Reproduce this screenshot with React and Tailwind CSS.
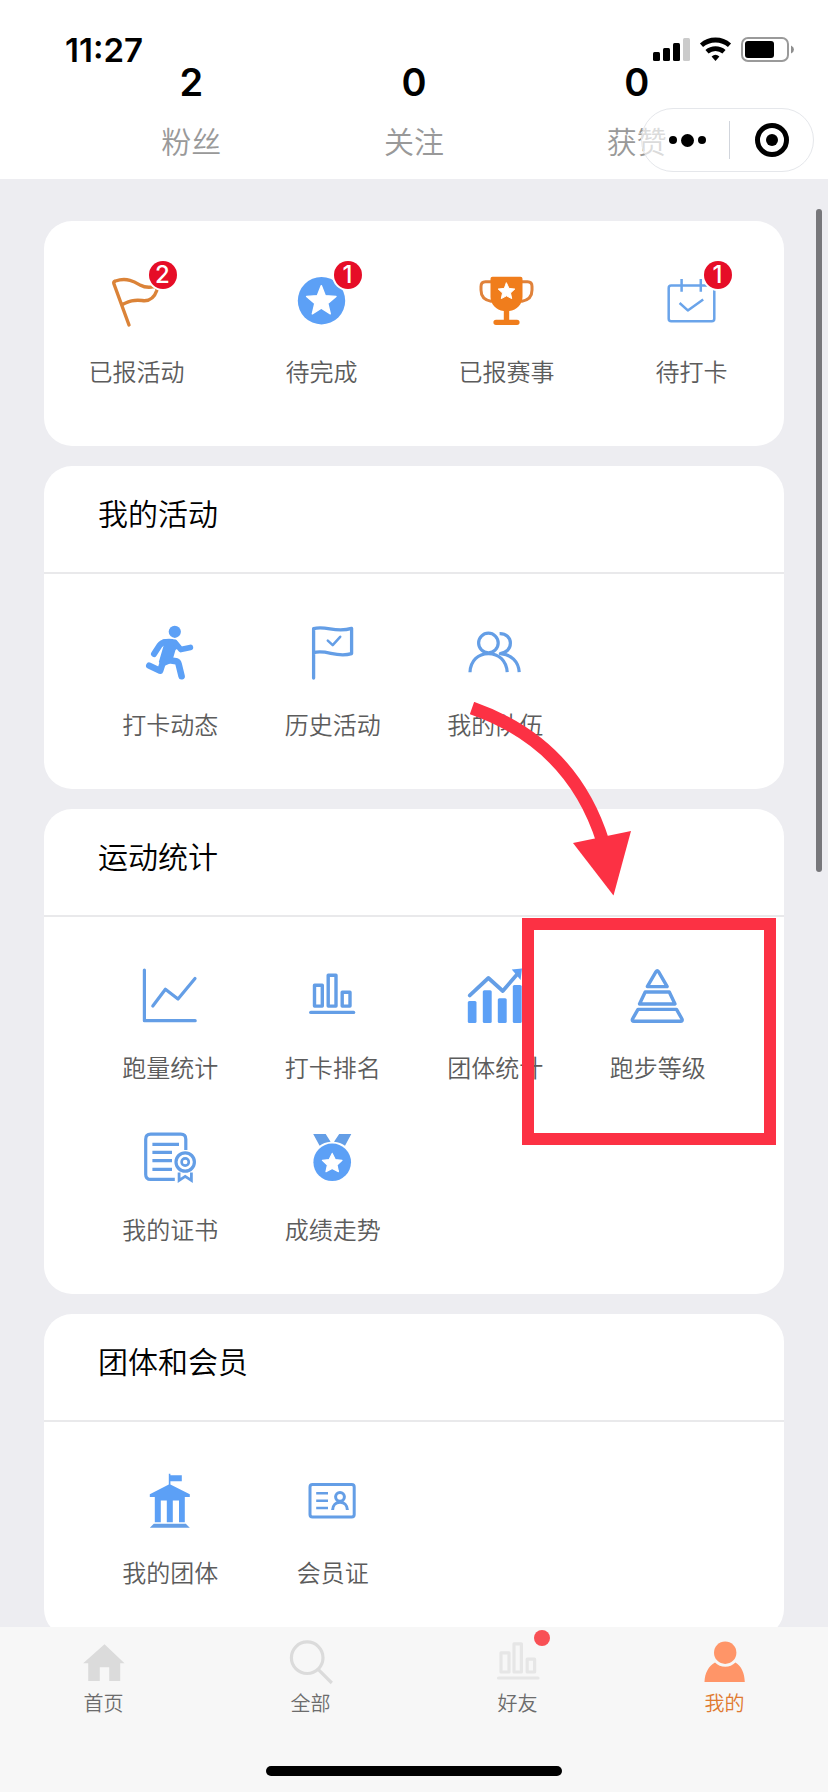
const BLUE = "#5ca0f6";
const LINE = "#649ee6";

const Icon = ({ size = 56, children }) => (
   <svg
      width={size}
      height={size}
      viewBox={`0 0 ${size} ${size}`}
      fill="none"
      strokeLinecap="round"
      strokeLinejoin="round"
      className="overflow-visible"
      aria-hidden="true"
   >
      {children}
   </svg>
);

const FlagIcon = () => (
   <Icon>
      <path
         d="M20 53 L4.8 11.5 Q4.4 9.6 6.5 9 C18 5 26 10 31 13 Q37.5 16.5 44.8 14.7 Q49 14 47.8 18.5 C45 26.5 40 29.5 33 28.5 C25 27.3 20 29.5 13 32.6"
         stroke="#db8338"
         strokeWidth="3.4"
      />
   </Icon>
);

const StarIcon = () => (
   <Icon>
      <circle cx="27.5" cy="28.7" r="23.7" fill={BLUE} />
      <path
         d="M27.3 13.6 L31.2 23.6 L42 24.4 L33.8 31.4 L36.3 41.8 L27.3 36.2 L18.3 41.8 L20.8 31.4 L12.6 24.4 L23.4 23.6 Z"
         fill="#fff"
         stroke="#fff"
         strokeWidth="1.4"
      />
   </Icon>
);

const TrophyIcon = () => (
   <Icon>
      <g stroke="#e0823a" strokeWidth="3">
         <path d="M12 9.8 H6.5 Q2 9.8 2 14.5 V18 Q2 27.5 12 29.2" />
         <path d="M43 9.8 H48.5 Q53 9.8 53 14.5 V18 Q53 27.5 43 29.2" />
      </g>
      <path
         d="M13.5 4.7 H41.5 Q43.5 4.7 43.5 6.7 V25 C43.5 32 38 38 30.2 39 V47.7 H38 Q40.6 47.7 40.6 50.3 Q40.6 53 38 53 H17 Q14.4 53 14.4 50.3 Q14.4 47.7 17 47.7 H24.8 V39 C17 38 11.5 32 11.5 25 V6.7 Q11.5 4.7 13.5 4.7 Z"
         fill="#f07d1c"
      />
      <path
         d="M27.5 11 L30 16.4 L35.8 17 L31.5 21 L32.7 26.6 L27.5 23.8 L22.3 26.6 L23.5 21 L19.2 17 L25 16.4 Z"
         fill="#fff"
         stroke="#fff"
         strokeWidth="1"
      />
   </Icon>
);

const CalendarIcon = () => (
   <Icon>
      <g stroke="#6aa4ea" strokeWidth="2.5" strokeLinecap="butt">
         <rect x="4.7" y="13.4" width="45.6" height="35.8" rx="2.5" />
         <path d="M17.6 7 V19.8 M36.8 7 V19.8" />
         <path d="M15.6 31 L23.8 38.4 L39.2 27.4" />
      </g>
   </Icon>
);

const RunnerIcon = () => (
   <Icon>
      <circle cx="32.8" cy="6.8" r="6.1" fill={BLUE} />
      <path
         d="M20.5 14.6 Q28 12.6 34 15 L39 21 L33.5 25 L31 33.5 L28 38.5 L21 41.5 L16.8 37 L21.5 21 Z"
         fill={BLUE}
      />
      <g stroke={BLUE}>
         <path d="M24 17 Q19.5 17.5 17.5 20.5 L12 29" strokeWidth="6" />
         <path d="M33 17.5 L38.8 24.6 L48.4 22.4" strokeWidth="5.6" />
         <path d="M26 35 L34 36.2 Q36 36.8 36.6 39 L39.6 51.2" strokeWidth="6.6" />
         <path d="M21 37 L18.2 45.8 L7.2 40.6" strokeWidth="6.4" />
      </g>
   </Icon>
);

const HistoryIcon = () => (
   <Icon>
      <path
         d="M8.6 53 V3.6 C22 .2 30 8.6 46.6 3.4 V28.6 C31 33.4 22 24 8.6 27.7"
         stroke={LINE}
         strokeWidth="3.3"
      />
      <path d="M22.8 15.6 L27.7 20.2 L35.2 11.8" stroke={LINE} strokeWidth="2.5" />
   </Icon>
);

const TeamIcon = () => (
   <Icon>
      <g stroke={LINE} strokeWidth="3.2" strokeLinecap="butt">
         <circle cx="21.4" cy="18" r="9.8" />
         <path d="M3 47.2 C3.5 36 11 28.6 21.4 28.6 C32 28.6 39.5 36 40.2 47.2" />
         <path d="M32.6 8.6 C39 8.4 43.4 12.6 43.4 18 C43.4 24 39 27.4 33.4 28.6 C44 29.4 51.6 36.4 52.2 47.2" />
      </g>
   </Icon>
);

const LineChartIcon = () => (
   <Icon>
      <path d="M2.4 2 V52.7 H53.2" stroke={LINE} strokeWidth="3.2" />
      <path d="M10.8 38 L23.4 21.2 L36 31 L53 10.4" stroke={LINE} strokeWidth="3.2" />
   </Icon>
);

const RankIcon = () => (
   <Icon>
      <g stroke={LINE} strokeWidth="3.4">
         <rect x="9.5" y="17.3" width="7.8" height="20.8" />
         <rect x="23.2" y="7.3" width="7.8" height="30.8" />
         <rect x="37.2" y="24.3" width="7.8" height="13.8" />
         <path d="M5.8 44.4 H48.6" />
      </g>
   </Icon>
);

const GroupChartIcon = () => (
   <Icon>
      <g fill={BLUE}>
         <rect x=".8" y="33" width="8.7" height="22" rx="1.5" />
         <rect x="15.8" y="22.3" width="8.9" height="32.7" rx="1.5" />
         <rect x="30.8" y="30.3" width="8.9" height="24.7" rx="1.5" />
         <rect x="45.8" y="17" width="8.9" height="38" rx="1.5" />
         <path d="M44.8 1.6 L55 .6 L53.6 12 Z" />
      </g>
      <path d="M2.8 27.4 L21.4 10 L35.8 23 L50.4 6" stroke={LINE} strokeWidth="3.8" />
   </Icon>
);

const PyramidIcon = () => (
   <Icon>
      <g stroke={LINE} strokeWidth="3.4">
         <path d="M26 3.6 Q27.25 1.8 28.5 3.6 L37.2 18.6 H17.3 Z" />
         <path d="M15.2 24 H39.3 L45 36 H9.5 Z" />
         <path d="M8 41.4 H46.5 L52 51 Q52.8 53.3 50.5 53.3 H4 Q1.7 53.3 2.5 51 Z" />
      </g>
   </Icon>
);

const CertificateIcon = () => (
   <Icon>
      <g stroke={LINE} strokeWidth="3.2" strokeLinecap="butt">
         <path d="M43.8 20 V9.2 Q43.8 4.2 38.8 4.2 H8.7 Q3.7 4.2 3.7 9.2 V44.4 Q3.7 49.4 8.7 49.4 H32.8" />
         <path d="M10.4 14.4 H37 M10.4 22.4 H30 M10.4 30.7 H30 M10.4 39.4 H30" />
         <circle cx="43.2" cy="32" r="9.2" />
         <circle cx="43.2" cy="32" r="3.6" strokeWidth="2.6" />
         <path
            d="M37.1 42.4 V50.4 L43.2 46.4 L49.4 50.4 V42.4"
            strokeWidth="2.8"
            strokeLinejoin="miter"
         />
      </g>
   </Icon>
);

const MedalIcon = () => (
   <Icon>
      <path d="M8.2 4 H20.7 L25.6 11.8 Q19 12.4 14.6 15.8 Z" fill={LINE} />
      <path d="M46.3 4 H34.2 L29 11.8 Q35.5 12.4 40 15.8 Z" fill={LINE} />
      <circle cx="27.2" cy="32.3" r="18.8" fill={BLUE} />
      <path
         d="M27.2 23.4 L30.2 29.6 L37 30.4 L32 35 L33.4 41.6 L27.2 38.4 L21 41.6 L22.4 35 L17.4 30.4 L24.2 29.6 Z"
         fill="#fff"
         stroke="#fff"
         strokeWidth="1.2"
      />
   </Icon>
);

const HallIcon = () => (
   <Icon>
      <path
         d="M26.8 .7 H28.4 V2.3 H39.8 V8.3 H28.4 V11.4 L47.8 21.3 V24 H42.8 V49.3 H37 V27.4 H30.8 V49.3 H24.8 V27.4 H18.8 V49.3 H12.8 V24 H7.8 V21.3 L26.8 11.4 Z"
         fill={BLUE}
      />
      <path d="M11.8 50.8 H43.8 L47.8 54.8 H7.8 Z" fill={LINE} />
   </Icon>
);

const MemberCardIcon = () => (
   <Icon>
      <g stroke={LINE} strokeWidth="3">
         <rect x="5" y="11.5" width="44.2" height="32.4" rx="2.5" />
         <g strokeLinecap="butt">
            <path d="M11.2 20.2 H23 M11.2 27.7 H23 M11.2 35 H23" strokeWidth="2.6" />
            <circle cx="35" cy="23.8" r="4.4" />
            <path d="M27.6 37 C27.8 32 31 29.2 35 29.2 C39 29.2 42.2 32 42.4 37" />
         </g>
      </g>
   </Icon>
);

const HomeIcon = () => (
   <Icon size={44}>
      <path
         d="M22.5 4.3 L42.5 23.3 H38.2 V41 H27.2 V27.3 H17.8 V41 H6.2 V23.3 H1.2 Z"
         fill="#dbdbdb"
      />
   </Icon>
);

const SearchIcon = () => (
   <Icon size={44}>
      <g stroke="#dbdbdb" strokeWidth="3.2" strokeLinecap="butt">
         <circle cx="18.2" cy="17.7" r="15.8" />
         <path d="M29.2 29.4 L42.8 43" />
      </g>
   </Icon>
);

const FriendsIcon = () => (
   <Icon size={44}>
      <g stroke="#e6e6e6" strokeWidth="3.2">
         <rect x="5" y="12.8" width="8" height="19.2" />
         <rect x="18" y="3.8" width="7.4" height="28.2" />
         <rect x="31.2" y="19.2" width="7.4" height="12.8" />
         <path d="M2.5 38 H42" />
      </g>
   </Icon>
);

const MeIcon = () => (
   <Icon size={44}>
      <g fill="#ff9568">
         <circle cx="22.2" cy="12.7" r="11.2" />
         <path d="M1.5 42 C1.8 32.6 5.6 26 12 22.4 A14 14 0 0 0 32.4 22.4 C38.4 26 41.5 32.6 41.8 42 Z" />
      </g>
   </Icon>
);

const stats = [
   { label: "粉丝", value: 2 },
   { label: "关注", value: 0 },
   { label: "获赞", value: 0 },
];

const shortcuts = [
   { label: "已报活动", icon: FlagIcon, badge: 2 },
   { label: "待完成", icon: StarIcon, badge: 1 },
   { label: "已报赛事", icon: TrophyIcon },
   { label: "待打卡", icon: CalendarIcon, badge: 1 },
];

const activities = [
   { label: "打卡动态", icon: RunnerIcon },
   { label: "历史活动", icon: HistoryIcon },
   { label: "我的队伍", icon: TeamIcon },
];

const statistics = [
   { label: "跑量统计", icon: LineChartIcon },
   { label: "打卡排名", icon: RankIcon },
   { label: "团体统计", icon: GroupChartIcon },
   { label: "跑步等级", icon: PyramidIcon },
   { label: "我的证书", icon: CertificateIcon },
   { label: "成绩走势", icon: MedalIcon },
];

const membership = [
   { label: "我的团体", icon: HallIcon },
   { label: "会员证", icon: MemberCardIcon },
];

const tabs = [
   { label: "首页", icon: HomeIcon },
   { label: "全部", icon: SearchIcon },
   { label: "好友", icon: FriendsIcon, dot: true },
   { label: "我的", icon: MeIcon, active: true },
];

const StatusBar = () => (
   <div className="flex items-center justify-between pt-[34px] pl-[65px] pr-[34px]">
      <span className="text-[33px] leading-8 font-semibold">11:27</span>
      <svg width="142" height="26" viewBox="0 0 142 26" aria-hidden="true">
         <rect x="1" y="15" width="7" height="9" rx="1.5" />
         <rect x="11" y="11" width="7" height="13" rx="1.5" />
         <rect x="21" y="6" width="7" height="18" rx="1.5" />
         <rect x="31" y="1" width="7" height="23" rx="1.5" fill="#cbcbcb" />
         <g fill="none" stroke="#000" strokeWidth="4.8">
            <path d="M49.5 8.2 A21.5 21.5 0 0 1 77.5 8.2" />
            <path d="M55 14.8 A13 13 0 0 1 72 14.8" />
         </g>
         <path d="M59.6 19.4 Q63.5 16.2 67.4 19.4 L63.5 24 Z" />
         <rect
            x="90"
            y="1"
            width="46"
            height="23"
            rx="6"
            fill="none"
            stroke="#9a9a9a"
            strokeWidth="2"
         />
         <rect x="93" y="4" width="29" height="17" rx="3" />
         <path d="M139 8.5 Q142 10 142 12.5 Q142 15 139 16.5 Z" fill="#8e8e8e" />
      </svg>
   </div>
);

const Capsule = () => (
   <div className="absolute top-[108px] right-[14px] flex h-16 w-[173px] items-center rounded-full border border-gray-200 bg-white/65">
      <button
         type="button"
         aria-label="更多"
         className="flex h-full flex-1 items-center justify-center gap-1 pl-1"
      >
         <span className="size-2 rounded-full bg-black" />
         <span className="size-[13px] rounded-full bg-black" />
         <span className="size-2 rounded-full bg-black" />
      </button>
      <span className="h-[38px] w-px bg-gray-300" />
      <button
         type="button"
         aria-label="关闭"
         className="flex h-full flex-1 items-center justify-center"
      >
         <span className="flex size-[34px] items-center justify-center rounded-full border-5 border-black">
            <span className="size-3 rounded-full bg-black" />
         </span>
      </button>
   </div>
);

const Entry = ({ item }) => (
   <a href="#" className="flex flex-col items-center gap-7">
      <span className="relative">
         <item.icon />
         {item.badge && (
            <span className="absolute -top-[11px] -right-3 flex size-7 items-center justify-center rounded-full bg-[#e60d27] text-2xl leading-none font-medium text-white ring-2 ring-white">
               {item.badge}
            </span>
         )}
      </span>
      <span className="text-2xl leading-[34px] -mb-[2px] font-[350] text-[#5c5c5c]">
         {item.label}
      </span>
   </a>
);

const Section = ({ title, items, children }) => (
   <section className="relative rounded-[28px] bg-white">
      <h2 className="border-b-2 border-[#e9e9eb] px-[54px] pt-[27px] pb-[37px] text-[30px] leading-[42px] font-[350] text-black">
         {title}
      </h2>
      <div className="grid grid-cols-4 gap-y-[46px] px-[45px] pt-[51px] pb-12">
         {items.map((item) => (
            <Entry key={item.label} item={item} />
         ))}
      </div>
      {children}
   </section>
);

// red arrow and frame pointing at the level entry
const Highlight = () => (
   <div className="pointer-events-none">
      <svg
         width="161"
         height="194"
         viewBox="0 0 161 194"
         className="absolute -top-[107px] right-[153px]"
         aria-hidden="true"
      >
         <path
            d="M2 6 Q102 41 133 140"
            fill="none"
            stroke="#fc3144"
            strokeWidth="13"
         />
         <path d="M103 141 L161 129 L143.5 193.5 Z" fill="#fc3144" />
      </svg>
      <div className="absolute top-[109px] right-2 h-[227px] w-[254px] border-12 border-[#fc3144]" />
   </div>
);

const TabBar = () => (
   <nav className="shrink-0 bg-[#f7f7f7] pt-[13px]">
      <div className="grid grid-cols-4">
         {tabs.map((tab) => (
            <a
               key={tab.label}
               href="#"
               className="flex flex-col items-center gap-2"
            >
               <span className="relative">
                  <tab.icon />
                  {tab.dot && (
                     <span className="absolute -top-[10px] -right-[10px] size-4 rounded-full bg-[#f85055]" />
                  )}
               </span>
               <span
                  className={
                     tab.active
                        ? "text-xl leading-6 font-[350] text-[#e07a30]"
                        : "text-xl leading-6 font-[350] text-[#6c6c6c]"
                  }
               >
                  {tab.label}
               </span>
            </a>
         ))}
      </div>
      <div className="flex justify-center pt-[50px] pb-4">
         <span className="h-[10px] w-[296px] rounded-full bg-black" />
      </div>
   </nav>
);

const App = () => {
   return (
      <div className="flex h-screen flex-col bg-[#ededf1] font-['Inter','Noto_Sans_CJK_SC',sans-serif] text-black">
         <header className="relative shrink-0 bg-white pb-4">
            <StatusBar />
            <dl className="grid grid-cols-3 px-20">
               {stats.map((stat) => (
                  <div
                     key={stat.label}
                     className="flex flex-col-reverse items-center gap-[23px]"
                  >
                     <dt className="text-[30px] leading-[42px] font-[350] text-[#999]">
                        {stat.label}
                     </dt>
                     <dd className="text-[38px] leading-8 font-semibold">
                        {stat.value}
                     </dd>
                  </div>
               ))}
            </dl>
            <Capsule />
         </header>

         <div className="relative min-h-0 flex-1">
            <main className="flex h-full flex-col gap-5 overflow-y-auto px-11 pt-[42px] pb-5 [scrollbar-width:none]">
               <section className="grid grid-cols-4 rounded-[28px] bg-white pt-[51px] pb-[58px]">
                  {shortcuts.map((item) => (
                     <Entry key={item.label} item={item} />
                  ))}
               </section>
               <Section title="我的活动" items={activities} />
               <Section title="运动统计" items={statistics}>
                  <Highlight />
               </Section>
               <Section title="团体和会员" items={membership} />
            </main>
            <span className="absolute top-[30px] right-[6px] h-[663px] w-[6px] rounded-full bg-[#77777b]" />
         </div>

         <TabBar />
      </div>
   );
};

export default App;
